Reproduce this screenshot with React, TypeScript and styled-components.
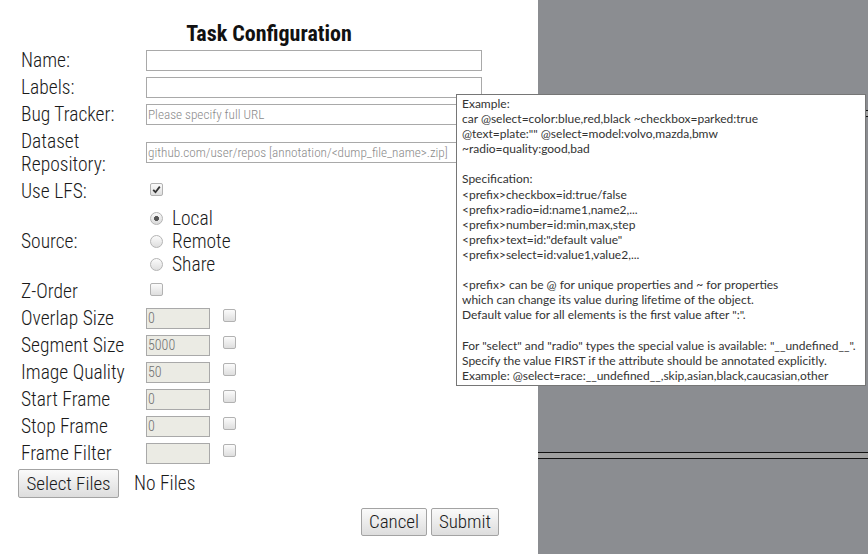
import React from 'react';
import styled, { createGlobalStyle } from 'styled-components';

const narrow = `"Roboto Condensed", "Arial Narrow", Roboto, sans-serif`;

const GlobalStyle = createGlobalStyle`
    html, body {
        margin: 0;
        padding: 0;
        background: #ffffff;
    }
    body {
        font-family: ${narrow};
    }
`;

const Page = styled.div`
    display: flex;
    width: 868px;
    height: 554px;
    overflow: hidden;
    position: relative;
`;

const FormPanel = styled.div`
    width: 538px;
    flex-shrink: 0;
    background: #ffffff;
    display: flex;
    flex-direction: column;
    padding: 22px 39px 0 21px;
    box-sizing: border-box;
`;

const Title = styled.div`
    font: bold 22px ${narrow};
    color: #111;
    text-align: center;
    line-height: 24px;
    margin-left: -21px;
    margin-right: -39px;
    margin-bottom: 2.5px;
`;

const FormGrid = styled.div`
    display: grid;
    grid-template-columns: 125px 1fr;
    row-gap: 4px;
    align-items: center;
`;

const Label = styled.div`
    font: 300 19.5px ${narrow};
    line-height: 23px;
    color: #1a1a1a;
`;

const Field = styled.div`
    display: flex;
    align-items: center;
    gap: 9px;
`;

const TextInput = styled.input<{ $small?: boolean }>`
    box-sizing: border-box;
    width: ${(p) => (p.$small ? '64px' : '336px')};
    height: 21px;
    border: 1px solid #a9a9a9;
    background: ${(p) => (p.$small ? '#ebebe4' : '#ffffff')};
    color: #707070;
    font: 300 ${(p) => (p.$small ? '14px' : '13.2px')} ${narrow};
    padding: 0 1px;
    margin: 0;
    outline: none;
    &::placeholder {
        color: #8a8a8a;
    }
`;

const Box = styled.span<{ $offset?: number }>`
    display: inline-flex;
    align-items: center;
    justify-content: center;
    box-sizing: border-box;
    width: 13px;
    height: 13px;
    border: 1px solid #b2b2b2;
    border-radius: 2px;
    background: linear-gradient(#fbfbfb, #dedede);
    margin-left: 4px;
    position: relative;
    top: ${(p) => p.$offset ?? 0}px;
`;

const Check = ({ checked, offset }: { checked?: boolean; offset?: number }) => (
    <Box $offset={offset}>
        {checked && (
            <svg width="9" height="9" viewBox="0 0 9 9">
                <path d="M1.2 4.8 L3.5 7.2 L7.8 1.6" stroke="#333" strokeWidth="1.8" fill="none" />
            </svg>
        )}
    </Box>
);

const RadioList = styled.div`
    display: flex;
    flex-direction: column;
`;

const RadioRow = styled.label`
    display: flex;
    align-items: center;
    gap: 9px;
    font: 300 19.5px ${narrow};
    line-height: 23px;
    color: #1a1a1a;
`;

const RadioDot = styled.span<{ $on?: boolean }>`
    box-sizing: border-box;
    width: 13px;
    height: 13px;
    margin-left: 4px;
    border-radius: 50%;
    border: 1px solid #b4b4b4;
    background: ${(p) =>
        p.$on
            ? 'radial-gradient(circle, #555 0 2.2px, transparent 2.8px), linear-gradient(#f8f8f8, #dadada)'
            : 'linear-gradient(#fbfbfb, #dedede)'};
`;

const Button = styled.button<{ $w: number }>`
    font: 300 19px ${narrow};
    color: #1a1a1a;
    width: ${(p) => p.$w}px;
    height: 29px;
    padding: 0;
    border: 1px solid #a3a3a3;
    border-radius: 2px;
    background: linear-gradient(#fafafa, #dddddd);
    cursor: pointer;
`;

const FilesRow = styled.div`
    display: flex;
    align-items: center;
    gap: 15px;
    margin-top: 4px;
    margin-left: -3px;
`;

const NoFiles = styled.span`
    font: 300 19.5px ${narrow};
    color: #1a1a1a;
`;

const Actions = styled.div`
    display: flex;
    justify-content: flex-end;
    gap: 4px;
    margin-top: 10px;
    & > button {
        height: 28px;
    }
`;

const Viewer = styled.div`
    flex: 1;
    background: #8b8d91;
    display: flex;
    flex-direction: column;
`;

const Pane = styled.div<{ $h?: number }>`
    height: ${(p) => (p.$h ? `${p.$h}px` : 'auto')};
    flex: ${(p) => (p.$h ? 'none' : 1)};
`;

const Divider = styled.div`
    height: 7px;
    box-sizing: border-box;
    border-top: 1px solid #111;
    border-bottom: 1px solid #111;
    background: #a0a0a0;
`;

const Tooltip = styled.div`
    position: absolute;
    left: 456px;
    top: 94px;
    width: 410px;
    box-sizing: border-box;
    padding: 1px 5px 2px;
    background: #ffffff;
    border: 1px solid #767676;
    font: 12px Lato, "Open Sans", sans-serif;
    line-height: 15.1px;
    color: #333;
    white-space: pre;
    overflow: hidden;
    z-index: 2;
`;

const tooltipText = `Example:
car @select=color:blue,red,black ~checkbox=parked:true
@text=plate:"" @select=model:volvo,mazda,bmw
~radio=quality:good,bad

Specification:
<prefix>checkbox=id:true/false
<prefix>radio=id:name1,name2,...
<prefix>number=id:min,max,step
<prefix>text=id:"default value"
<prefix>select=id:value1,value2,...

<prefix> can be @ for unique properties and ~ for properties
which can change its value during lifetime of the object.
Default value for all elements is the first value after ":".

For "select" and "radio" types the special value is available: "__undefined__".
Specify the value FIRST if the attribute should be annotated explicitly.
Example: @select=race:__undefined__,skip,asian,black,caucasian,other`;

const numberFields = [
    { label: 'Overlap Size', value: '0' },
    { label: 'Segment Size', value: '5000' },
    { label: 'Image Quality', value: '50' },
    { label: 'Start Frame', value: '0' },
    { label: 'Stop Frame', value: '0' },
    { label: 'Frame Filter', value: '' },
];

const App = () => {
    return (
        <Page>
            <GlobalStyle />
            <FormPanel>
                <Title>Task Configuration</Title>
                <FormGrid>
                    <Label>Name:</Label>
                    <Field>
                        <TextInput />
                    </Field>
                    <Label>Labels:</Label>
                    <Field>
                        <TextInput />
                    </Field>
                    <Label>Bug Tracker:</Label>
                    <Field>
                        <TextInput placeholder="Please specify full URL" />
                    </Field>
                    <Label>
                        Dataset
                        <br />
                        Repository:
                    </Label>
                    <Field>
                        <TextInput placeholder="github.com/user/repos [annotation/<dump_file_name>.zip]" />
                    </Field>
                    <Label>Use LFS:</Label>
                    <Field>
                        <Check checked offset={-2} />
                    </Field>
                    <Label>Source:</Label>
                    <RadioList>
                        <RadioRow>
                            <RadioDot $on />
                            Local
                        </RadioRow>
                        <RadioRow>
                            <RadioDot />
                            Remote
                        </RadioRow>
                        <RadioRow>
                            <RadioDot />
                            Share
                        </RadioRow>
                    </RadioList>
                    <Label>Z-Order</Label>
                    <Field>
                        <Check offset={-2} />
                    </Field>
                    {numberFields.map((f) => (
                        <React.Fragment key={f.label}>
                            <Label>{f.label}</Label>
                            <Field>
                                <TextInput $small defaultValue={f.value} />
                                <Check offset={-3} />
                            </Field>
                        </React.Fragment>
                    ))}
                </FormGrid>
                <FilesRow>
                    <Button $w={101}>Select Files</Button>
                    <NoFiles>No Files</NoFiles>
                </FilesRow>
                <Actions>
                    <Button $w={66}>Cancel</Button>
                    <Button $w={68}>Submit</Button>
                </Actions>
            </FormPanel>
            <Viewer>
                <Pane $h={110} />
                <Divider />
                <Pane $h={335} />
                <Divider />
                <Pane />
            </Viewer>
            <Tooltip>{tooltipText}</Tooltip>
        </Page>
    );
};

export default App;
